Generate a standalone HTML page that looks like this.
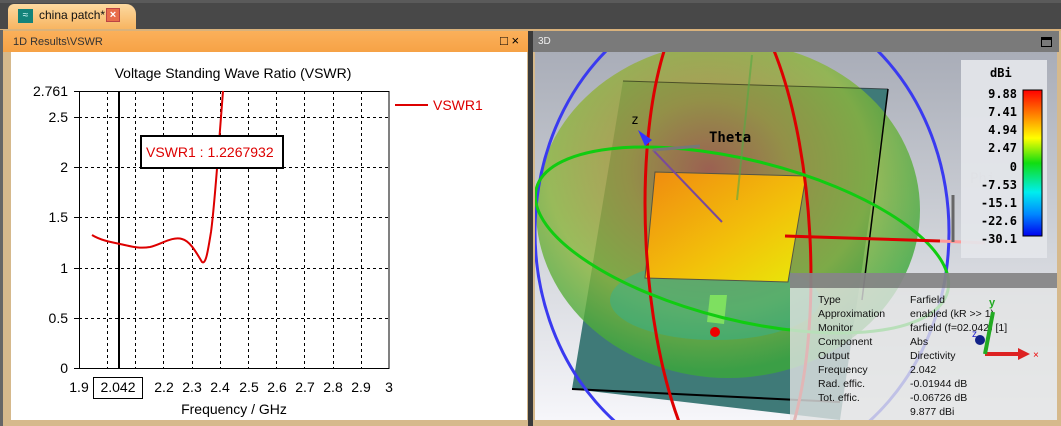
<!DOCTYPE html>
<html><head><meta charset="utf-8"><style>
*{margin:0;padding:0;box-sizing:border-box}
html,body{width:1061px;height:426px;overflow:hidden}
body{background:#454545;position:relative;font-family:"Liberation Sans",sans-serif}
.abs{position:absolute}
</style></head><body>
<div class="abs" style="left:0;top:0;width:1061px;height:30px;background:#484848;border-top:3px solid #5a5a5a"></div>
<div class="abs" style="left:8px;top:4px;width:128px;height:27px;background:linear-gradient(#fcd9a0,#f7b25c);border-radius:6px 10px 0 0"></div>
<div class="abs" style="left:18px;top:9px;width:15px;height:14px;background:#13837a;color:#dff;font-size:10px;line-height:14px;text-align:center">≈</div>
<div class="abs" style="left:39px;top:8px;font-size:12px;color:#111">china patch*</div>
<div class="abs" style="left:106px;top:8px;width:14px;height:14px;background:#e86c4a;border:1px solid #b44;color:#fff;font-size:11px;line-height:12px;text-align:center;font-weight:bold">×</div>
<div class="abs" style="left:0;top:29px;width:1061px;height:3px;background:#d9b27c"></div>
<div class="abs" style="left:3px;top:31px;width:525px;height:395px;background:#d6b98c"></div>
<div class="abs" style="left:3px;top:31px;width:525px;height:21px;background:linear-gradient(#fbb05a,#f6a246)"></div>
<div class="abs" style="left:13px;top:36px;font-size:11px;color:#333">1D Results\VSWR</div>
<div class="abs" style="left:500px;top:33px;font-size:13px;color:#000">□ ×</div>
<div class="abs" style="left:11px;top:52px;width:516px;height:368px;background:#fff"></div>
<div class="abs" style="left:0;top:30px;width:3px;height:396px;background:#666"></div>
<svg class="abs" style="left:0;top:0" width="530" height="426">
<g font-family="Liberation Sans,sans-serif" font-size="14" fill="#000">
<text x="233" y="78" text-anchor="middle">Voltage Standing Wave Ratio (VSWR)</text>
<g stroke="#000" stroke-dasharray="3,3" stroke-width="1">
<line x1="107.5" y1="91" x2="107.5" y2="368"/><line x1="135.5" y1="91" x2="135.5" y2="368"/><line x1="163.5" y1="91" x2="163.5" y2="368"/><line x1="192.5" y1="91" x2="192.5" y2="368"/><line x1="220.5" y1="91" x2="220.5" y2="368"/><line x1="248.5" y1="91" x2="248.5" y2="368"/><line x1="276.5" y1="91" x2="276.5" y2="368"/><line x1="304.5" y1="91" x2="304.5" y2="368"/><line x1="333.5" y1="91" x2="333.5" y2="368"/><line x1="361.5" y1="91" x2="361.5" y2="368"/>
<line x1="79" y1="117.5" x2="389" y2="117.5"/><line x1="79" y1="167.5" x2="389" y2="167.5"/><line x1="79" y1="217.5" x2="389" y2="217.5"/><line x1="79" y1="268.5" x2="389" y2="268.5"/><line x1="79" y1="318.5" x2="389" y2="318.5"/>
</g>
<rect x="79.5" y="91.5" width="309.5" height="277" fill="none" stroke="#000"/>
<g stroke="#000"><line x1="74" y1="91.5" x2="79" y2="91.5"/><line x1="74" y1="117.5" x2="79" y2="117.5"/><line x1="74" y1="167.5" x2="79" y2="167.5"/><line x1="74" y1="217.5" x2="79" y2="217.5"/><line x1="74" y1="268.5" x2="79" y2="268.5"/><line x1="74" y1="318.5" x2="79" y2="318.5"/><line x1="74" y1="368.5" x2="79" y2="368.5"/></g>
<line x1="119" y1="91" x2="119" y2="368" stroke="#000" stroke-width="2"/>
<path d="M92,235 C100,240 110,242 120,244 C130,246 138,249 150,247 C160,245 172,236 182,239 C190,241 196,252 202,262 C206,265 208,250 211,232 C214,210 217,170 220,130 L223,91" fill="none" stroke="#d00" stroke-width="2"/>
<rect x="141" y="136" width="142" height="32" fill="#fff" stroke="#000" stroke-width="2"/>
<text x="146" y="157" fill="#d00" font-size="14">VSWR1 : 1.2267932</text>
<g text-anchor="end"><text x="68" y="96">2.761</text><text x="68" y="122">2.5</text><text x="68" y="172">2</text><text x="68" y="222">1.5</text><text x="68" y="273">1</text><text x="68" y="323">0.5</text><text x="68" y="373">0</text></g>
<g text-anchor="middle"><text x="79" y="392">1.9</text><text x="164" y="392">2.2</text><text x="192" y="392">2.3</text><text x="220" y="392">2.4</text><text x="249" y="392">2.5</text><text x="277" y="392">2.6</text><text x="305" y="392">2.7</text><text x="333" y="392">2.8</text><text x="361" y="392">2.9</text><text x="389" y="392">3</text><text x="118" y="392">2.042</text></g>
<rect x="93.5" y="377.5" width="49" height="21" fill="none" stroke="#000"/>
<text x="234" y="414" text-anchor="middle">Frequency / GHz</text>
<line x1="395" y1="105" x2="428" y2="105" stroke="#d00" stroke-width="2"/>
<text x="433" y="110" fill="#d00">VSWR1</text>
</g>
</svg>
<div class="abs" style="left:528px;top:31px;width:5px;height:395px;background:#3a3a3a"></div>
<div class="abs" style="left:533px;top:31px;width:528px;height:395px;background:#d6b98c"></div>
<div class="abs" style="left:533px;top:31px;width:526px;height:21px;background:#7a7a7a"></div>
<div class="abs" style="left:538px;top:36px;font-size:10px;color:#eee">3D</div>
<div class="abs" style="left:1041px;top:37px;width:11px;height:10px;border:1.5px solid #000;border-top-width:3px"></div>
<svg class="abs" style="left:535px;top:52px" width="522" height="368" viewBox="535 52 522 368">
<defs>
<linearGradient id="bg" x1="0" y1="0" x2="0" y2="1"><stop offset="0" stop-color="#a9adb8"/><stop offset="0.5" stop-color="#cfd2d8"/><stop offset="1" stop-color="#f6f6fa"/></linearGradient>
<radialGradient id="sph" cx="0.45" cy="0.38" r="0.6"><stop offset="0" stop-color="#b25a48"/><stop offset="0.35" stop-color="#a8963c"/><stop offset="0.7" stop-color="#8cb63c"/><stop offset="1" stop-color="#3aa83a"/></radialGradient>
<linearGradient id="patch" x1="0" y1="0" x2="1" y2="1"><stop offset="0" stop-color="#f08a10"/><stop offset="0.6" stop-color="#f2c20a"/><stop offset="1" stop-color="#e8e80a"/></linearGradient>
<linearGradient id="cb" x1="0" y1="0" x2="0" y2="1"><stop offset="0" stop-color="#f00"/><stop offset="0.2" stop-color="#f90"/><stop offset="0.33" stop-color="#ff0"/><stop offset="0.5" stop-color="#1d1"/><stop offset="0.7" stop-color="#0ee"/><stop offset="0.85" stop-color="#08f"/><stop offset="1" stop-color="#00e"/></linearGradient>
</defs>
<rect x="535" y="52" width="522" height="368" fill="url(#bg)"/>
<polygon points="623,81 888,89 840,420 572,389" fill="#3f7a78"/>
<ellipse cx="728" cy="210" rx="192" ry="168" fill="url(#sph)" opacity="0.8"/>
<ellipse cx="715" cy="300" rx="105" ry="40" fill="#2fb39a" opacity="0.45"/>
<polyline points="572,389 840,402" stroke="#000" stroke-width="2" fill="none"/>
<polyline points="888,89 862,300" stroke="#000" stroke-width="1.5" fill="none"/>
<polyline points="623,81 888,89" stroke="#000" stroke-width="1" fill="none" opacity="0.5"/>
<polygon points="655,172 806,176 788,282 645,278" fill="url(#patch)" stroke="#554" stroke-width="1"/>
<polygon points="710,295 727,295 724,324 707,322" fill="#7ee060"/>
<circle cx="715" cy="332" r="5" fill="#e00"/>
<ellipse cx="742" cy="232" rx="207" ry="240" fill="none" stroke="#3a3af0" stroke-width="3"/>
<ellipse cx="728" cy="240" rx="82" ry="255" transform="rotate(-3 728 240)" fill="none" stroke="#d00" stroke-width="3"/>
<ellipse cx="742" cy="240" rx="212" ry="80" transform="rotate(14 742 240)" fill="none" stroke="#1c1" stroke-width="3"/>
<line x1="752" y1="55" x2="737" y2="200" stroke="#5a4" stroke-width="2" opacity="0.6"/>
<line x1="785" y1="236" x2="940" y2="241" stroke="#d00" stroke-width="3"/>
<line x1="940" y1="241" x2="985" y2="243" stroke="#f99" stroke-width="3"/>
<line x1="653" y1="150" x2="722" y2="222" stroke="#7a4a9a" stroke-width="2"/>
<line x1="653" y1="150" x2="700" y2="146" stroke="#777" stroke-width="3"/>
<polygon points="638,130 652,140 645,146" fill="#33f"/>
<text x="631" y="124" font-family="DejaVu Sans Mono,monospace" font-size="13">z</text>
<text x="709" y="142" font-family="DejaVu Sans Mono,monospace" font-size="14" font-weight="bold">Theta</text>
<line x1="953" y1="242" x2="953" y2="195" stroke="#666" stroke-width="3"/>
<text x="970" y="183" fill="#aaa" font-family="DejaVu Sans Mono,monospace" font-size="14">Phi</text>
<rect x="961" y="60" width="86" height="198" fill="#e4e6ea" opacity="0.92"/>
<text x="990" y="77" font-family="DejaVu Sans Mono,monospace" font-size="12" font-weight="bold">dBi</text>
<rect x="1023" y="90" width="19" height="146" fill="url(#cb)" stroke="#000"/>
<g font-family="DejaVu Sans Mono,monospace" font-size="12" font-weight="bold" text-anchor="end">
<text x="1017" y="98">9.88</text><text x="1017" y="116">7.41</text><text x="1017" y="134">4.94</text><text x="1017" y="152">2.47</text><text x="1017" y="171">0</text><text x="1017" y="189">-7.53</text><text x="1017" y="207">-15.1</text><text x="1017" y="225">-22.6</text><text x="1017" y="243">-30.1</text></g>
<rect x="790" y="273" width="267" height="147" fill="#e2e4e4" opacity="0.8"/>
<rect x="790" y="273" width="267" height="15" fill="#666" opacity="0.7"/>
<g font-family="Liberation Sans,sans-serif" font-size="10.5" fill="#111">
<text x="818" y="303">Type</text><text x="818" y="317">Approximation</text><text x="818" y="331">Monitor</text><text x="818" y="345">Component</text><text x="818" y="359">Output</text><text x="818" y="373">Frequency</text><text x="818" y="387">Rad. effic.</text><text x="818" y="401">Tot. effic.</text>
<text x="910" y="303">Farfield</text><text x="910" y="317">enabled (kR &gt;&gt; 1)</text><text x="910" y="331">farfield (f=02.042) [1]</text><text x="910" y="345">Abs</text><text x="910" y="359">Directivity</text><text x="910" y="373">2.042</text><text x="910" y="387">-0.01944 dB</text><text x="910" y="401">-0.06726 dB</text><text x="910" y="415">9.877 dBi</text></g>
<line x1="985" y1="354" x2="1020" y2="354" stroke="#d22" stroke-width="4"/>
<polygon points="1018,348 1030,354 1018,360" fill="#d22"/>
<text x="1033" y="358" fill="#e00" font-size="10">×</text>
<line x1="985" y1="354" x2="993" y2="312" stroke="#2a2" stroke-width="4"/>
<text x="989" y="306" fill="#2a2" font-size="11" font-weight="bold">y</text>
<circle cx="980" cy="340" r="5" fill="#128"/>
<text x="972" y="337" fill="#22c" font-size="10">z</text>
</svg>
<div class="abs" style="left:533px;top:420px;width:528px;height:6px;background:#d6b98c"></div>
</body></html>
